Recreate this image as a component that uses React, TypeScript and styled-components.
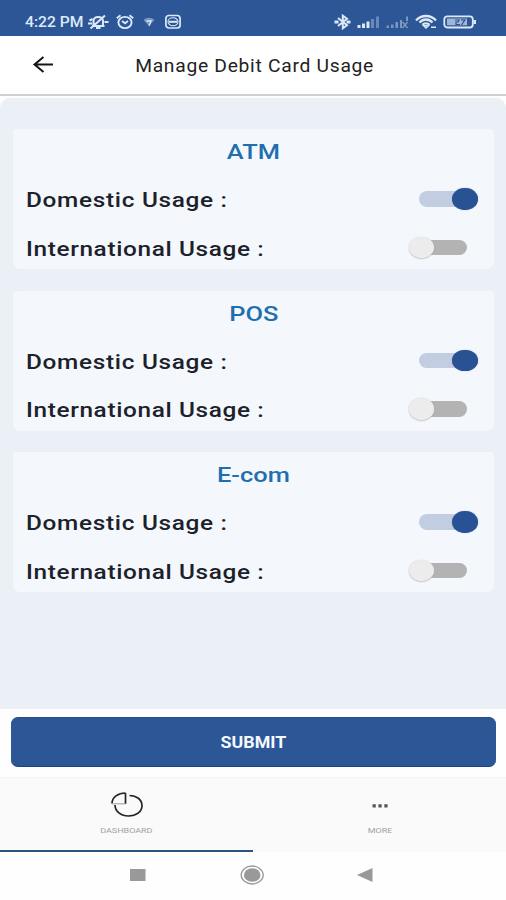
import React, { useState } from "react";
import styled, { createGlobalStyle } from "styled-components";

const GlobalStyle = createGlobalStyle`
  * { box-sizing: border-box; }
  body { margin: 0; background: #fff; font-family: Roboto, "Liberation Sans", sans-serif; }
  button { font-family: inherit; border: 0; padding: 0; background: none; cursor: pointer; }
`;

const Screen = styled.main`
  width: 506px;
  height: 900px;
  display: flex;
  flex-direction: column;
  overflow: hidden;
  background: #fefefe;
`;

/* Type on this screen is wider than the natural Roboto proportions. */
const Wide = styled.span<{ $x: number; $origin?: string; $track?: number }>`
  display: inline-block;
  white-space: nowrap;
  letter-spacing: ${(p) => p.$track ?? 0}px;
  transform: scaleX(${(p) => p.$x});
  transform-origin: ${(p) => p.$origin ?? "center"};
`;

const StatusBar = styled.header`
  height: 36px;
  flex: none;
  display: flex;
  justify-content: space-between;
  align-items: center;
  padding: 8px 29px 0 25px;
  background: #2c5696;
  color: #dce9f8;
`;

const Clock = styled.time`
  width: 62px;
  font-size: 14px;
  font-weight: 500;
  line-height: 20px;
`;

const StatusGroup = styled.div<{ $gap: number }>`
  display: flex;
  align-items: center;
  gap: ${(p) => p.$gap}px;
  svg { display: block; }
`;

const TitleBar = styled.div`
  height: 60px;
  flex: none;
  display: grid;
  grid-template-columns: 86px 1fr 80px;
  align-items: center;
  border-bottom: 2px solid #d0d0d0;
  background: #fff;
`;

const BackButton = styled.button`
  justify-self: center;
  width: 24px;
  height: 24px;
  svg { display: block; }
`;

const Title = styled.h1`
  margin: 0;
  padding: 1px 3px 0 0;
  font-size: 17.5px;
  font-weight: 400;
  line-height: 24px;
  text-align: center;
  color: #222;
`;

const Content = styled.section`
  height: 611px;
  flex: none;
  margin-top: 2px;
  padding: 31px 12px 0 13px;
  display: flex;
  flex-direction: column;
  gap: 21.5px;
  border-radius: 10px 10px 0 0;
  background: #ebeff6;
`;

const Card = styled.article`
  height: 140px;
  flex: none;
  padding: 12px 13px 0;
  border-radius: 4px 4px 7px 7px;
  background: #f4f8fc;
`;

const CardTitle = styled.h2`
  margin: 0 0 12px;
  font-size: 20.5px;
  font-weight: 500;
  line-height: 22px;
  text-align: center;
  color: #1f6fae;
`;

const Row = styled.div`
  height: 48.5px;
  display: flex;
  justify-content: space-between;
  align-items: center;
`;

const Label = styled.span`
  padding-top: 2px;
  font-size: 21px;
  font-weight: 500;
  line-height: 26px;
  color: #1c212b;
`;

const Switch = styled.button<{ $on: boolean }>`
  width: 69px;
  height: 24px;
  margin: -1px 3.5px 0 0;
  display: flex;
  align-items: center;
  justify-content: ${(p) => (p.$on ? "flex-end" : "flex-start")};
  &::before {
    content: "";
    order: ${(p) => (p.$on ? 0 : 1)};
    width: 47px;
    height: 15.5px;
    margin: ${(p) => (p.$on ? "0 -14px 0 0" : "0 0 0 -14px")};
    border-radius: 9px;
    background: ${(p) => (p.$on ? "#c3cde1" : "#b3b3b4")};
  }
`;

const Knob = styled.span<{ $on: boolean }>`
  z-index: 1;
  width: 25.5px;
  height: 21.5px;
  border-radius: 50%;
  background: ${(p) => (p.$on ? "#295294" : "#ececec")};
  box-shadow: 0 ${(p) => (p.$on ? "0 1px #6d8bbb" : "0.5px 1.5px #aaa")};
`;

const Actions = styled.div`
  height: 69px;
  flex: none;
  padding: 8px 10px 0 11px;
  border-bottom: 1px solid #f1f3f4;
`;

const Submit = styled.button`
  width: 100%;
  height: 50px;
  display: block;
  border-radius: 7px;
  border-bottom: 1px solid #1d447f;
  border-top: 1px solid #224b87;
  background: #2c5696;
  color: #f4f9ff;
  font-size: 16.5px;
  font-weight: 700;
  padding-top: 2px;
  line-height: 46px;
`;

const Tabs = styled.nav`
  height: 74px;
  flex: none;
  display: grid;
  grid-template-columns: 1fr 1fr;
  background: #fafafa;
`;

const Tab = styled.button<{ $active?: boolean }>`
  display: flex;
  flex-direction: column;
  align-items: center;
  padding-top: 13px;
  border-bottom: 2px solid ${(p) => (p.$active ? "#2c5480" : "transparent")};
  color: #a2a2a2;
  font-size: 8px;
  line-height: 12px;
  svg { display: block; margin-bottom: 6px; }
`;

const SystemNav = styled.footer`
  flex: 1;
  display: flex;
  align-items: flex-start;
  padding: 10px 0 0 124px;
  gap: 86px;
  svg { display: block; }
`;

const channels = ["ATM", "POS", "E-com"];
const titleScale: Record<string, number> = { ATM: 1.24, POS: 1.24, "E-com": 1.24 };

function Toggle({ initial, label }: { initial: boolean; label: string }) {
  const [on, setOn] = useState(initial);
  return (
    <Switch $on={on} role="switch" aria-checked={on} aria-label={label} onClick={() => setOn(!on)}>
      <Knob $on={on} />
    </Switch>
  );
}

function StatusIcons() {
  return (
    <StatusGroup $gap={7}>
      <svg width="22" height="16" viewBox="0 0 22 16" fill="none" stroke="currentColor" strokeWidth="2">
        <path d="M5 12h12.500M6.500 11.500V7c0-5.500 9.500-5.500 9.500 0v4.500M9 14h4.500M3.500 14.500 18 1.500M1 9.500h4M17.500 8h4M2.500 6.500l3-1.500" />
      </svg>
      <svg width="19" height="16" viewBox="0 0 19 16" fill="none" stroke="currentColor" strokeWidth="1.900">
        <ellipse cx="9" cy="8.500" rx="6.600" ry="5.600" />
        <path d="M.8 4.200 4.500 1.300M17.200 4.200l-3.700-2.900M6 7l3 2.300L12 7" />
      </svg>
      <svg width="16" height="16" viewBox="0 0 16 16" fill="none">
        <path d="M1.500 6c3-3 8-3 11 0l-5 5.500h-1z" fill="#7796c2" />
        <path d="M4.500 7h4.500L7 12" stroke="currentColor" strokeWidth="1.300" />
      </svg>
      <svg width="18" height="16" viewBox="0 0 18 16" fill="none" stroke="currentColor" strokeWidth="1.700">
        <rect x=".9" y="1.500" width="14.200" height="12.500" rx="3" />
        <ellipse cx="8" cy="7.800" rx="5" ry="4" strokeWidth="1.100" />
        <path d="M4 7.800h8" strokeWidth="2" />
      </svg>
    </StatusGroup>
  );
}

function SignalIcons() {
  return (
    <StatusGroup $gap={6}>
      <svg width="17" height="16" viewBox="0 0 17 16" fill="none" stroke="currentColor" strokeWidth="2">
        <path d="m4 4 9 7.300-4.200 3V1.700l4.200 3L4 12" />
        <path d="M.5 8h4M12.500 8h4" strokeWidth="2.800" />
      </svg>
      <svg width="23" height="16" viewBox="0 0 23 16" fill="currentColor">
        <path d="M.5 11h3v3h-3zM5 9.500h3V14H5zM9.500 7.500h3V14h-3z" />
        <path d="M14 5h3v9h-3zM19 2.500h3V14h-3z" opacity=".35" />
      </svg>
      <svg width="23" height="16" viewBox="0 0 23 16" fill="currentColor" opacity=".45">
        <path d="M.5 11.500h2.500V14H.5zM5 10.500h2.500V14H5zM9.500 8h2.500v6H9.500zM14 6h2v8h-2zM20 2.500h2V7h-2z" />
        <path d="m16.500 8 5 6m0-6-5 6" stroke="currentColor" strokeWidth="1.500" />
      </svg>
      <svg width="22" height="16" viewBox="0 0 22 16" fill="none" stroke="currentColor" strokeWidth="2.300">
        <path d="M1 6.500c5.500-6 14.500-6 20 0M4.500 8.500c3.800-4 9.200-4 13 0M7.500 10.800c2-2 5-2 7 0" />
        <path d="M8.500 11.500h5L11 14zM16 13.200h5" strokeWidth="1.500" />
      </svg>
      <svg width="34" height="16" viewBox="0 0 34 16" fill="none">
        <rect x="1.300" y="2.300" width="28.500" height="11.200" rx="3" stroke="currentColor" strokeWidth="1.800" />
        <path d="M4 4.500h20v6.800H4z" fill="#9eb6d8" />
        <path d="M30.500 6v4H33V6z" fill="currentColor" />
        <path d="M12 6h4l-1 2h-2v2.500h4M18 5.800h4L18.500 11" stroke="#31558c" strokeWidth="1.200" />
      </svg>
    </StatusGroup>
  );
}

export default function App() {
  return (
    <>
      <GlobalStyle />
      <Screen>
        <StatusBar>
          <StatusGroup $gap={0}>
            <Clock><Wide $x={1.12} $origin="left">4:22 PM</Wide></Clock>
            <StatusIcons />
          </StatusGroup>
          <SignalIcons />
        </StatusBar>
        <TitleBar>
          <BackButton aria-label="Back">
            <svg width="24" height="24" viewBox="0 0 24 24" fill="none" stroke="#161616" strokeWidth="2">
              <path d="M22 11.500H3.500M12.500 4 3.500 11.500l9 7.500" />
            </svg>
          </BackButton>
          <Title><Wide $x={1.1} $track={0.65}>Manage Debit Card Usage</Wide></Title>
        </TitleBar>
        <Content>
          {channels.map((name) => (
            <Card key={name}>
              <CardTitle><Wide $x={titleScale[name]}>{name}</Wide></CardTitle>
              <Row>
                <Label><Wide $x={1.16} $track={0.6} $origin="left">Domestic Usage :</Wide></Label>
                <Toggle initial label={`${name} domestic usage`} />
              </Row>
              <Row>
                <Label><Wide $x={1.16} $track={0.55} $origin="left">International Usage :</Wide></Label>
                <Toggle initial={false} label={`${name} international usage`} />
              </Row>
            </Card>
          ))}
        </Content>
        <Actions>
          <Submit><Wide $x={1.08}>SUBMIT</Wide></Submit>
        </Actions>
        <Tabs>
          <Tab $active>
            <svg width="34" height="28" viewBox="0 0 34 28" fill="none" stroke="#242424" strokeWidth="1.700">
              <path d="M19.500 4.500c7 0 12.500 4 12.500 10.200S26 25 18.500 25 5 20.500 5 14" />
              <path d="M15.500 2v11" />
              <path d="M15.500 2C8 2 2 6 2 12.500" />
              <path d="M2 12.800h13.500" stroke="#aaa" strokeWidth="1.200" />
            </svg>
            <Wide $x={1.12}>DASHBOARD</Wide>
          </Tab>
          <Tab>
            <svg width="18" height="28" viewBox="0 0 18 28" fill="#585858">
              <path d="M1.500 13.200h3.300v3.200H1.500zM7.400 13.200h3.300v3.200H7.400zM13.300 13.200h3.300v3.200h-3.300z" />
            </svg>
            <Wide $x={1.12}>MORE</Wide>
          </Tab>
        </Tabs>
        <SystemNav>
          <svg width="28" height="26" viewBox="0 0 28 26"><path d="M6 7h15.500v12H6z" fill="#999" /></svg>
          <svg width="28" height="26" viewBox="0 0 28 26">
            <ellipse cx="14.200" cy="13" rx="11" ry="9" fill="none" stroke="#999" strokeWidth="1.300" />
            <ellipse cx="14.200" cy="13" rx="8.300" ry="6.800" fill="#999" />
          </svg>
          <svg width="28" height="26" viewBox="0 0 28 26"><path d="M20.500 6v14L5 13z" fill="#999" /></svg>
        </SystemNav>
      </Screen>
    </>
  );
}
